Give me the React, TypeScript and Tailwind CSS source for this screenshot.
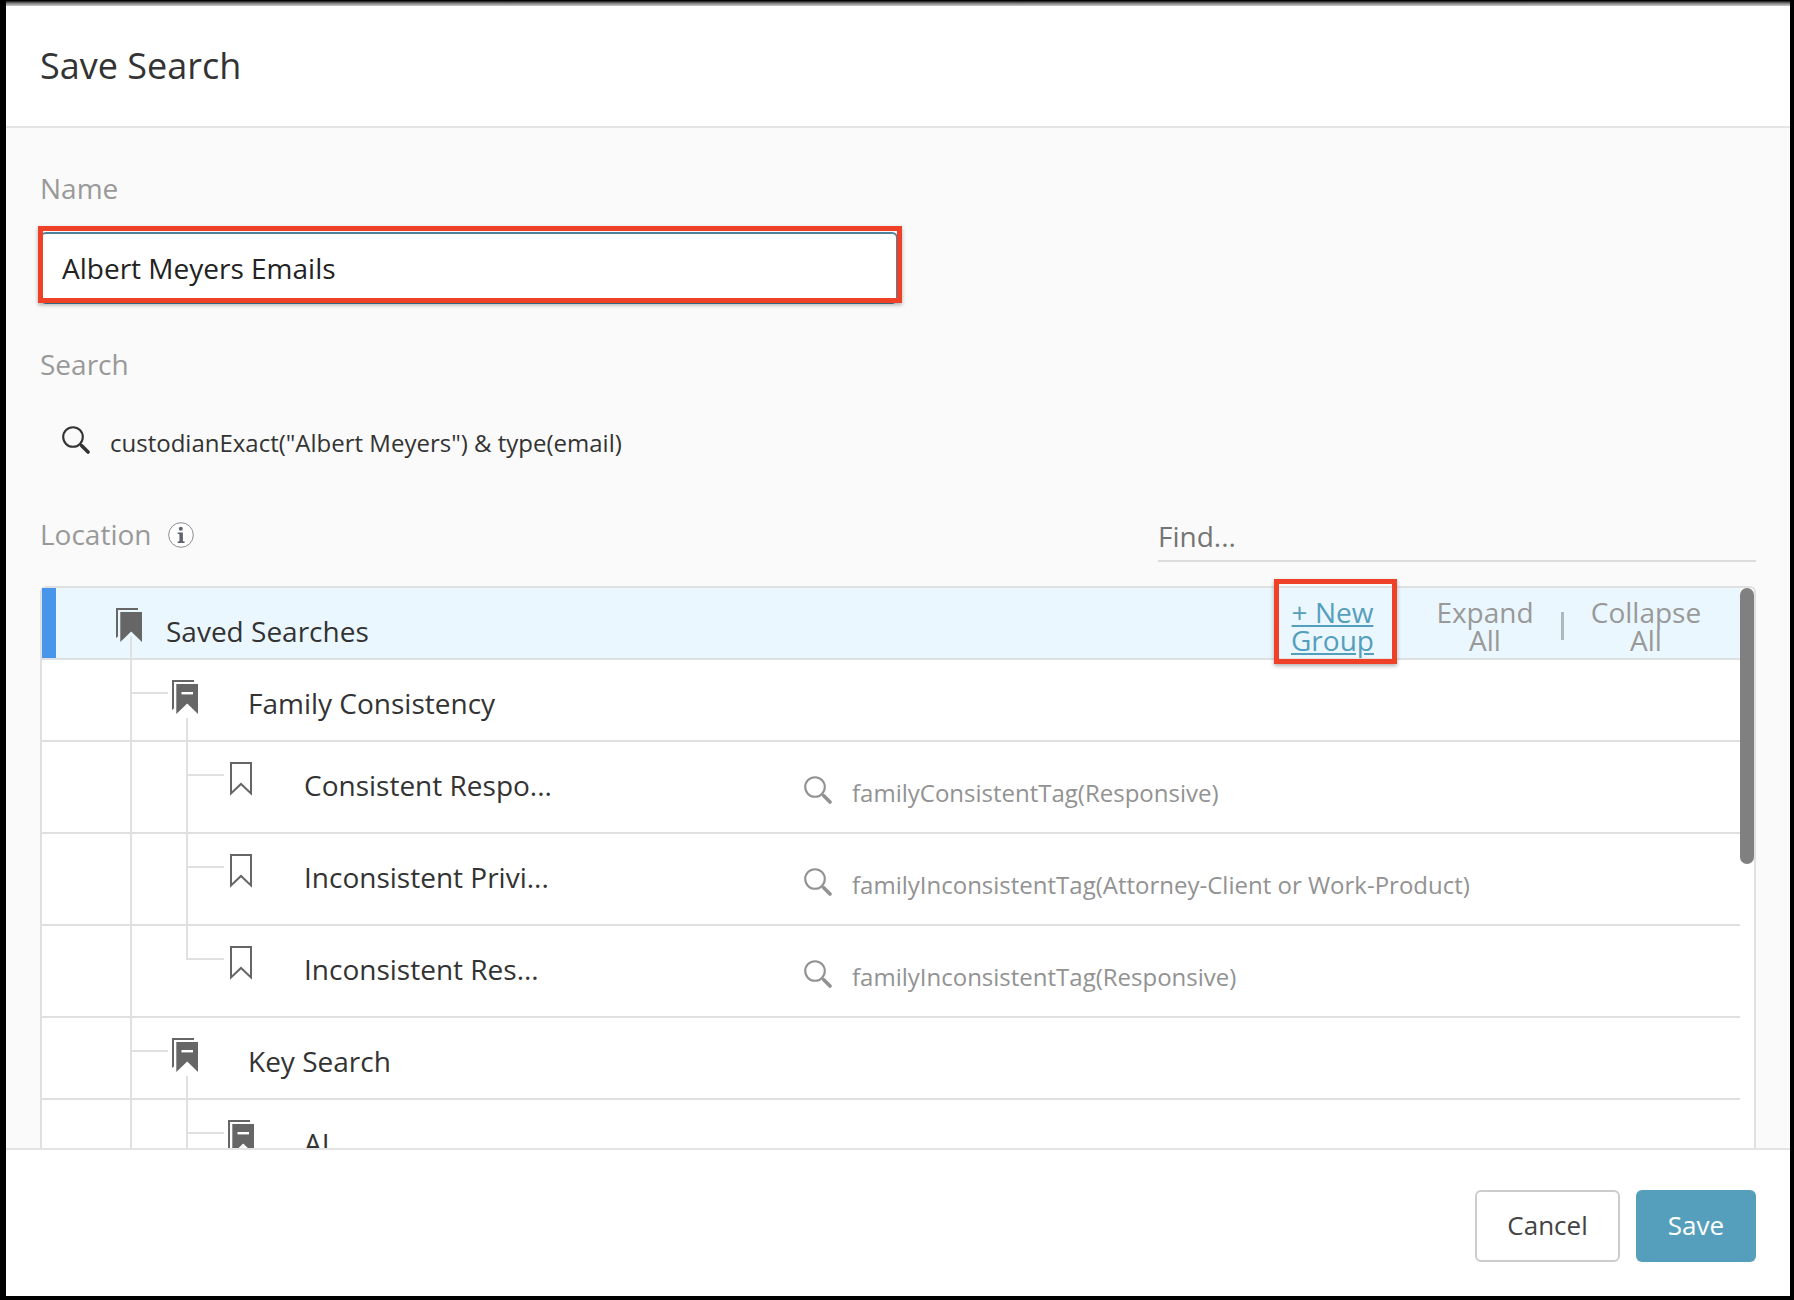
import React from "react";

function SearchIcon({ className }: { className: string }) {
  return (
    <svg viewBox="0 0 28 28" className={className} fill="none" stroke="currentColor" aria-hidden="true">
      <circle cx="11" cy="11" r="9.8" strokeWidth="2.1" />
      <path d="M18 18l3 3" strokeWidth="2.2" />
      <path d="M20 20l6 6" strokeWidth="3.6" strokeLinecap="round" />
    </svg>
  );
}

function StackIcon({ minus }: { minus: boolean }) {
  return (
    <svg viewBox="0 0 26 34" className="h-[34px] w-[26px] shrink-0" aria-hidden="true">
      <path d="M0 0H22V2H2V28.5L0 30Z" fill="#666" />
      <path d="M4.3 4H26V34L15.2 23.5L4.3 34Z" fill="#666" />
      {minus && <rect x="9.5" y="12" width="11.5" height="2.4" fill="#fff" />}
    </svg>
  );
}

function BookmarkIcon() {
  return (
    <svg viewBox="0 0 22 34" className="h-[34px] w-[22px] shrink-0" fill="none" aria-hidden="true">
      <path d="M1 1H21V31.5L11 22L1 31.5Z" stroke="#666" strokeWidth="2" />
    </svg>
  );
}

function Branch({ last, wide }: { last?: boolean; wide?: boolean }) {
  return (
    <div className={wide ? "flex w-[44px] shrink-0 flex-col" : "flex w-[42px] shrink-0 flex-col"}>
      <div className="h-8 w-[2px] bg-[#dfe0e1]" />
      <div className="h-[2px] w-[38px] bg-[#dfe0e1]" />
      {!last && <div className="w-[2px] flex-1 bg-[#dfe0e1]" />}
    </div>
  );
}

function Guide() {
  return <div className="w-14 shrink-0 border-l-2 border-[#dfe0e1]" />;
}

function Group({ name, nested }: { name: string; nested?: boolean }) {
  return (
    <li className="flex h-[82px] border-b-2 border-[#dfe0e1] pl-[88px]">
      {nested && <Guide />}
      <Branch />
      <div className="flex w-[26px] shrink-0 flex-col pt-5">
        <StackIcon minus />
        <div className="mt-1 ml-[14px] w-[2px] flex-1 bg-[#dfe0e1]" />
      </div>
      <span className="ml-[50px] pt-[23px] text-[28px] leading-10">{name}</span>
    </li>
  );
}

function Leaf({ name, query, last }: { name: string; query: string; last?: boolean }) {
  return (
    <li className="grid h-[92px] grid-cols-[762fr_936fr] border-b-2 border-[#dfe0e1]">
      <div className="flex pl-[88px]">
        <Guide />
        <Branch wide last={last} />
        <div className="pt-5">
          <BookmarkIcon />
        </div>
        <span className="ml-[52px] pt-[23px] text-[28px] leading-10 whitespace-nowrap">{name}</span>
      </div>
      <div className="flex text-[#929292]">
        <SearchIcon className="mt-[34px] size-7 shrink-0" />
        <span className="ml-5 pt-[35px] text-2xl whitespace-nowrap">{query}</span>
      </div>
    </li>
  );
}

export default function App() {
  return (
    <div className="flex h-screen flex-col border-r-4 border-b-4 border-l-[6px] border-black bg-white font-['Open_Sans','Noto_Sans',sans-serif] text-[#333]">
      <div className="h-1.5 shrink-0 bg-linear-to-b from-black via-[#777] to-[#ccc]" />
      <header className="flex h-[122px] shrink-0 items-center border-b-2 border-[#e4e4e4] px-[34px]">
        <h1 className="text-4xl">Save Search</h1>
      </header>

      <main className="flex min-h-0 flex-1 flex-col overflow-hidden bg-[#fafafa] px-[34px] pt-10">
        <label htmlFor="name" className="text-[28px] leading-10 text-[#999]">Name</label>
        <div className="relative mt-6 w-1/2">
          <input
            id="name"
            type="text"
            defaultValue="Albert Meyers Emails"
            className="block h-[72px] w-full rounded-md border-2 border-[#4c829b] bg-white px-5 text-[28px] text-[#222] outline-none"
          />
          <div className="pointer-events-none absolute -top-1.5 -right-1 bottom-px -left-0.5 border-[5px] border-[#ee4128] shadow-[0_2px_4px_rgba(0,0,0,0.3)]" />
        </div>

        <h2 className="mt-10 text-[28px] leading-10 text-[#999]">Search</h2>
        <div className="mt-[42px] flex pl-[22px]">
          <SearchIcon className="size-7 shrink-0" />
          <span className="ml-5 pt-px text-2xl">custodianExact("Albert Meyers") &amp; type(email)</span>
        </div>

        <div className="mt-[55px] flex h-12 justify-between">
          <div className="flex gap-4">
            <h2 className="text-[28px] leading-10 text-[#999]">Location</h2>
            <button type="button" aria-label="About locations" className="mt-2 size-[26px]">
              <svg viewBox="0 0 26 26" className="size-[26px]">
                <circle cx="13" cy="13" r="12.3" fill="#fff" stroke="#8b8d92" strokeWidth="1" />
                <circle cx="12.8" cy="6.8" r="2" fill="#5f6470" />
                <path d="M9.6 10.4H14.9V19.2L16.6 19.6V21H9.6V19.6L11.4 19.2V12.2L9.6 11.8Z" fill="#5f6470" />
              </svg>
            </button>
          </div>
          <input
            type="text"
            aria-label="Find"
            placeholder="Find..."
            className="w-[598px] rounded-none border-b-2 border-[#dcdcdc] bg-transparent pb-0.5 text-[28px] outline-none placeholder:text-[#757575]"
          />
        </div>

        <div className="mt-6 flex min-h-0 flex-1 rounded-t-md border-x-2 border-t-2 border-[#dfe0e1] bg-white">
          <ul className="min-w-0 flex-1">
            <li className="flex h-[72px] border-b-2 border-[#dfe0e1] bg-[#ebf7fe]">
              <div className="w-[14px] shrink-0 bg-[#4a95ec]" />
              <div className="ml-[60px] flex w-[26px] shrink-0 flex-col pt-5">
                <StackIcon minus={false} />
                <div className="-mt-1.5 ml-[14px] w-[2px] flex-1 bg-[#dfe0e1]" />
              </div>
              <span className="ml-6 flex-1 pt-[23px] text-[28px] leading-10">Saved Searches</span>
              <div className="flex items-center pt-1.5 text-[28px] leading-7 text-[#999]">
                <div className="relative">
                  <a href="#new-group" className="block w-[85px] text-center text-[#559fbd] underline">+ New Group</a>
                  <div className="pointer-events-none absolute -top-[19px] -right-[22px] -bottom-2.5 -left-4 border-[5px] border-[#ee4128] shadow-[0_2px_4px_rgba(0,0,0,0.3)]" />
                </div>
                <button type="button" className="ml-[60px] w-[100px]">Expand All</button>
                <div className="ml-[26px] h-7 w-[3px] bg-[#b0b8bc]" />
                <button type="button" className="mr-9 ml-6 w-[116px]">Collapse All</button>
              </div>
            </li>
            <Group name="Family Consistency" />
            <Leaf name="Consistent Respo..." query="familyConsistentTag(Responsive)" />
            <Leaf name="Inconsistent Privi..." query="familyInconsistentTag(Attorney-Client or Work-Product)" />
            <Leaf name="Inconsistent Res..." query="familyInconsistentTag(Responsive)" last />
            <Group name="Key Search" />
            <Group name="AI" nested />
          </ul>
          <div className="w-[14px] shrink-0">
            <div className="h-[276px] rounded-full bg-[#808080]" />
          </div>
        </div>
      </main>

      <footer className="flex shrink-0 justify-end gap-4 border-t-2 border-[#e4e4e4] px-[34px] pt-10 pb-[34px] text-[26px]">
        <button type="button" className="h-[72px] rounded-md border-2 border-[#ccc] px-[30px] pb-0.5 text-[#444]">Cancel</button>
        <button type="button" className="h-[72px] rounded-md bg-[#559fbd] px-8 pb-0.5 text-white">Save</button>
      </footer>
    </div>
  );
}
